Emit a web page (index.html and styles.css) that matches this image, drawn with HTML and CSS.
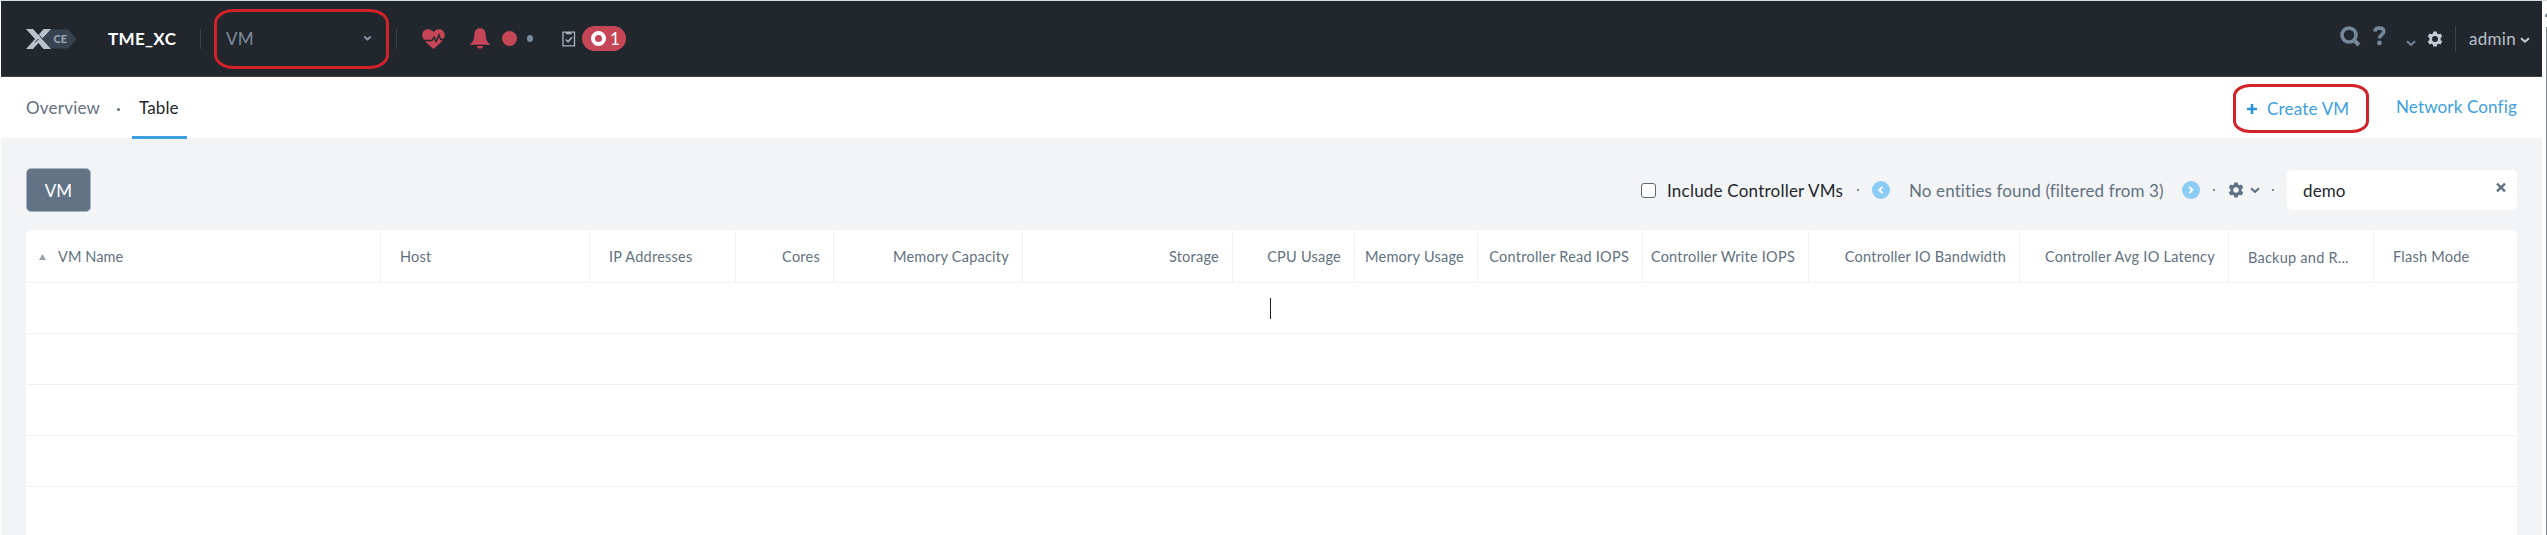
FILE: index.html
```html
<!DOCTYPE html>
<html lang="en">
<head>
<meta charset="utf-8">
<title>VM Table</title>
<link rel="stylesheet" href="styles.css">
</head>
<body>
<div class="app">
<header class="topbar">
  <svg class="logo" width="52" height="22" viewBox="0 0 52 22">
    <path d="M23 1.500h19L50.500 11 42 20.500H23l-6-9.500z" fill="#37444f"/>
    <path d="M0 1h7l5.500 6 5-6H25l-9 10 9 10h-7.500l-5-6-5.500 6H0l9-10z" fill="#b9c1ca"/>
    <path d="M13.500 7.500l3.500 4M9 14.500l3.500-3.500" stroke="#22272e" stroke-width="1" fill="none"/>
    <text x="27.500" y="15" class="logo-text">CE</text>
  </svg>
  <span class="cluster">TME_XC</span>
  <i class="sep sep-a"></i>
  <div class="nav-select"><span>VM</span>
    <svg width="9" height="7" viewBox="0 0 9 7"><path d="M1.300 1.500l3.200 3 3.200-3" fill="none" stroke="#8b9bab" stroke-width="1.800"/></svg>
  </div>
  <i class="sep sep-b"></i>
  <svg class="heart" width="23" height="20" viewBox="0 0 23 20">
    <path d="M11.500 19.800C10 19 1 11.500.4 7.500-.4 2.500 3 .2 6 .2c2.500 0 4.500 1.200 5.500 3 1-1.800 3-3 5.500-3 3 0 6.400 2.300 5.600 7.300-.6 4-9.600 11.500-11.100 12.300z" fill="#c44657"/>
    <path d="M1 11.500h9l2-3.500 2 4.500 3-6.500 1.500 4.500h4" fill="none" stroke="#22272e" stroke-width="1.400"/>
  </svg>
  <svg class="bell" width="20" height="21" viewBox="0 0 20 21">
    <path d="M10 .3c3.600 0 5.400 2.500 5.600 6 .2 4.500.9 7.500 4.200 9.400v1.100H.2v-1.100c3.300-1.900 4-4.900 4.200-9.400.2-3.500 2-6 5.600-6zM6.800 18h6.400c-.4 1.700-1.600 2.600-3.200 2.600S7.200 19.700 6.800 18z" fill="#c44657"/>
  </svg>
  <i class="dot-red"></i><i class="dot-blue"></i>
  <svg class="clip" width="14" height="16" viewBox="0 0 14 16">
    <path d="M1 1.200h11.500v13.600H1z" fill="none" stroke="#a9b4bf" stroke-width="1.300"/>
    <path d="M4 1h5.500v2.300H4z" fill="#a9b4bf"/><path d="M3.800 8.500l2.200 2.300 4-4.600" fill="none" stroke="#a9b4bf" stroke-width="1.500"/>
  </svg>
  <div class="pill"><i class="ring"></i><span>1</span></div>
  <div class="top-right">
    <svg class="search" width="21" height="21" viewBox="0 0 21 21"><circle cx="9" cy="9" r="7" fill="none" stroke="#75879a" stroke-width="3.600"/><path d="M13.500 13.500l5.300 5.500" stroke="#75879a" stroke-width="4"/></svg>
    <svg class="help" width="13" height="20" viewBox="0 0 13 20"><path d="M1.800 5.500C2 3 3.800 1.900 6.300 1.900c2.800 0 4.500 1.400 4.500 3.600 0 3.200-4.300 3.200-4.300 7" fill="none" stroke="#75879a" stroke-width="3.500"/><circle cx="6.400" cy="17" r="2.400" fill="#75879a"/></svg>
    <svg class="chev-help" width="10" height="7" viewBox="0 0 10 7"><path d="M1 1.200l4 3.700 4-3.700" fill="none" stroke="#75879a" stroke-width="1.900"/></svg>
    <svg class="gear-top" width="16" height="16" viewBox="0 0 16 16"><path d="M6.300.5h3.400l.4 2 1.400.8 2-.7 1.700 2.900-1.600 1.400v2.200l1.600 1.400-1.700 2.900-2-.7-1.400.8-.4 2H6.300l-.4-2-1.400-.8-2 .7L.8 10.500l1.600-1.400V6.900L.8 5.500l1.700-2.900 2 .7 1.400-.8zM8 5a3 3 0 100 6 3 3 0 000-6z" fill="#c5ccd4" fill-rule="evenodd"/></svg>
    <i class="sep sep-c"></i>
    <span class="admin">admin</span>
    <svg class="chev-admin" width="10" height="7" viewBox="0 0 10 7"><path d="M1 1.200l4 3.500 4-3.500" fill="none" stroke="#c5ccd4" stroke-width="2.100"/></svg>
  </div>
</header>
<nav class="subbar">
  <span class="overview">Overview</span><i class="mid"></i><span class="tab">Table</span>
  <div class="actions">
    <div class="create"><svg width="10" height="10" viewBox="0 0 10 10"><path d="M5 0v10M0 5h10" stroke="#2a95da" stroke-width="2.600"/></svg><span>Create VM</span></div>
    <span class="network">Network Config</span>
  </div>
</nav>
<main class="content">
  <div class="toolbar">
    <button class="vm-btn">VM</button>
    <div class="tools">
      <i class="check"></i><span class="include">Include Controller VMs</span>
      <i class="tiny t1"></i>
      <svg class="prev" width="18" height="18" viewBox="0 0 18 18"><circle cx="9" cy="9" r="9" fill="#8accf4"/><path d="M10.500 5.800L7.300 9l3.200 3.200" fill="none" stroke="#fff" stroke-width="1.900"/></svg>
      <span class="found">No entities found (filtered from 3)</span>
      <svg class="next" width="18" height="18" viewBox="0 0 18 18"><circle cx="9" cy="9" r="9" fill="#8accf4"/><path d="M7.200 5.800L10.400 9l-3.200 3.200" fill="none" stroke="#fff" stroke-width="1.900"/></svg>
      <i class="tiny t2"></i>
      <svg class="gear" width="16" height="16" viewBox="0 0 16 16"><path d="M6.300.5h3.400l.4 2 1.400.8 2-.7 1.700 2.900-1.600 1.400v2.200l1.600 1.400-1.700 2.900-2-.7-1.400.8-.4 2H6.300l-.4-2-1.400-.8-2 .7L.8 10.500l1.600-1.400V6.900L.8 5.500l1.700-2.900 2 .7 1.400-.8zM8 5.200a2.800 2.800 0 100 5.600 2.800 2.800 0 000-5.600z" fill="#5f7183" fill-rule="evenodd"/></svg>
      <svg class="chev-gear" width="10" height="7" viewBox="0 0 10 7"><path d="M1 1.200l4 3.600 4-3.600" fill="none" stroke="#5f7183" stroke-width="2.100"/></svg>
      <i class="tiny t3"></i>
      <div class="filter"><span>demo</span><svg width="10" height="9" viewBox="0 0 10 9"><path d="M1 .7l8 7.600M9 .7L1 8.300" stroke="#5f7183" stroke-width="2.500"/></svg></div>
    </div>
  </div>
  <section class="table">
    <div class="row head">
      <div class="first"><svg width="7" height="6" viewBox="0 0 7 6"><path d="M3.500 0L7 6H0z" fill="#98a2ad"/></svg><span>VM Name</span></div>
      <div><span>Host</span></div>
      <div><span>IP Addresses</span></div>
      <div class="num"><span>Cores</span></div>
      <div class="num"><span>Memory Capacity</span></div>
      <div class="num"><span>Storage</span></div>
      <div class="num"><span>CPU Usage</span></div>
      <div class="num"><span>Memory Usage</span></div>
      <div class="num"><span>Controller Read IOPS</span></div>
      <div class="num"><span>Controller Write IOPS</span></div>
      <div class="num"><span>Controller IO Bandwidth</span></div>
      <div class="num"><span>Controller Avg IO Latency</span></div>
      <div class="backup"><span>Backup and R...</span></div>
      <div><span>Flash Mode</span></div>
    </div>
    <div class="row"></div><div class="row"></div><div class="row"></div><div class="row"></div><div class="row last"></div>
  </section>
</main>
</div>
<i class="scroll"></i>
<svg class="scroll-up" width="2" height="4" viewBox="0 0 2 4"><path d="M2 0v4H0V2z" fill="#80858a"/></svg>
<i class="caret"></i>
</body>
</html>
```
FILE: styles.css
```css
* { box-sizing: border-box; }
body { margin: 0; width: 2547px; height: 535px; overflow: hidden; position: relative; background: #fff; font-family: Lato, "Open Sans", sans-serif; font-size: 17px; letter-spacing: .12px; color: #22272e; border-top: 1px solid #d3dcdf; }
i { display: block; flex: none; }
svg { display: block; flex: none; }
span { white-space: nowrap; display: block; }
.app { margin-left: 1px; width: 2541px; height: 534px; display: flex; flex-direction: column; }
.topbar { height: 76px; flex: none; background: #22272e; border-bottom: 1px solid #3a4149; display: flex; align-items: center; padding-left: 25px; }
.logo-text { font: 900 11px Lato, sans-serif; fill: #97a3b0; letter-spacing: 0; }
.cluster { margin-left: 30px; width: 67px; color: #fff; font-weight: 700; letter-spacing: .35px; }
.sep { width: 1px; height: 20px; background: #3a434c; }
.sep-a { margin-left: 25px; }
.nav-select { margin-left: 13px; width: 175px; height: 60px; border: 3px solid #d2232a; border-radius: 20px / 14px; display: flex; align-items: center; justify-content: space-between; padding: 0 14px 0 9px; color: #7d8c9b; }
.sep-b { margin-left: 7px; }
.heart { margin-left: 25px; }
.bell { margin-left: 25px; }
.dot-red { width: 15px; height: 15px; border-radius: 50%; background: #c44657; margin-left: 12px; }
.dot-blue { width: 6px; height: 7px; border-radius: 50%; background: #7a8c9e; margin-left: 10px; }
.clip { margin-left: 29px; }
.pill { margin-left: 6px; width: 44px; height: 25px; border-radius: 13px; background: #c44657; display: flex; align-items: center; padding-left: 9px; color: #fff; }
.ring { width: 15px; height: 15px; border-radius: 50%; border: 4px solid #fff; }
.pill span { margin-left: 4px; }
.top-right { margin-left: auto; display: flex; align-items: center; padding-right: 12px; }
.search { margin-top: -5px; }
.help { margin-left: 12px; margin-top: -5px; }
.chev-help { margin-left: 20px; margin-top: 9px; }
.gear-top { margin-left: 11px; }
.sep-c { margin-left: 12px; height: 26px; }
.admin { margin-left: 13px; width: 46px; color: #b8c0c9; letter-spacing: .3px; }
.chev-admin { margin-left: 5px; margin-top: 4px; }
.subbar { height: 61px; flex: none; background: #fff; display: flex; padding-left: 25px; line-height: 62px; }
.overview { width: 74px; color: #627180; letter-spacing: .22px; }
.mid { width: 3px; height: 3px; border-radius: 50%; background: #627180; margin: 31px 12px 0 17px; }
.tab { width: 55px; height: 62px; padding-left: 7px; border-bottom: 3px solid #3b9fe0; position: relative; }
.actions { margin-left: auto; display: flex; color: #3b9fe0; padding-right: 25px; }
.create { width: 136px; height: 49px; margin: 7px 27px 0 0; border: 3px solid #d2232a; border-radius: 17px / 12px; display: flex; align-items: center; padding-left: 11px; line-height: 42px; }
.create span { margin-left: 10px; letter-spacing: .2px; }
.network { width: 121px; line-height: 60px; letter-spacing: .15px; }
.content { flex: 1; background: #f2f4f6; padding: 30px 25px 0; min-height: 0; }
.toolbar { display: flex; height: 44px; }
.vm-btn { width: 65px; height: 44px; border: 1px solid #a8b4c1; border-radius: 5px; background: #627386; color: #fff; font: inherit; padding: 0; text-align: center; }
.tools { margin-left: auto; display: flex; align-items: center; }
.check { width: 15px; height: 15px; border: 1px solid #606870; border-radius: 3px; background: #fff; }
.include { margin-left: 11px; width: 176px; letter-spacing: .22px; }
.tiny { width: 2px; height: 2px; background: #7c8894; }
.t1 { margin-left: 14px; }
.prev { margin-left: 13px; }
.found { margin-left: 19px; width: 255px; color: #627180; }
.next { margin-left: 18px; }
.t2 { margin-left: 13px; }
.gear { margin-left: 13px; }
.chev-gear { margin-left: 6px; }
.t3 { margin-left: 12px; }
.filter { margin-left: 13px; width: 230px; height: 40px; border-radius: 5px; background: #fff; display: flex; align-items: center; justify-content: space-between; padding: 0 11px 0 16px; }
.filter svg { margin-top: -5px; }
.table { margin-top: 18px; background: #fff; border-radius: 5px 5px 0 0; height: 310px; }
.row { height: 51px; border-bottom: 1px solid #eff1f3; }
.row.last { border: 0; }
.head { height: 53px; display: grid; grid-template-columns: 355px 209px 146px 98px 189px 210px 122px 123px 165px 166px 211px 209px 145px 143px; font-size: 14.5px; letter-spacing: .24px; color: #627180; padding-top: 1px; }
.head div { border-right: 1px solid #eff1f3; padding-left: 19px; display: flex; align-items: center; }
.head div:last-child { border-right: 0; }
.head .num { justify-content: flex-end; padding: 0 13px 0 0; }
.head .first { padding-left: 13px; letter-spacing: .1px; }
.first span { margin-left: 12px; }
.backup span { margin-top: 2px; }
.scroll { position: absolute; right: 0; top: 26px; width: 1px; bottom: 0; background: #80858a; }
.scroll-up { position: absolute; right: 0; top: 12px; }
.caret { position: absolute; left: 1270px; top: 297px; width: 1px; height: 21px; background: #222; }
```
